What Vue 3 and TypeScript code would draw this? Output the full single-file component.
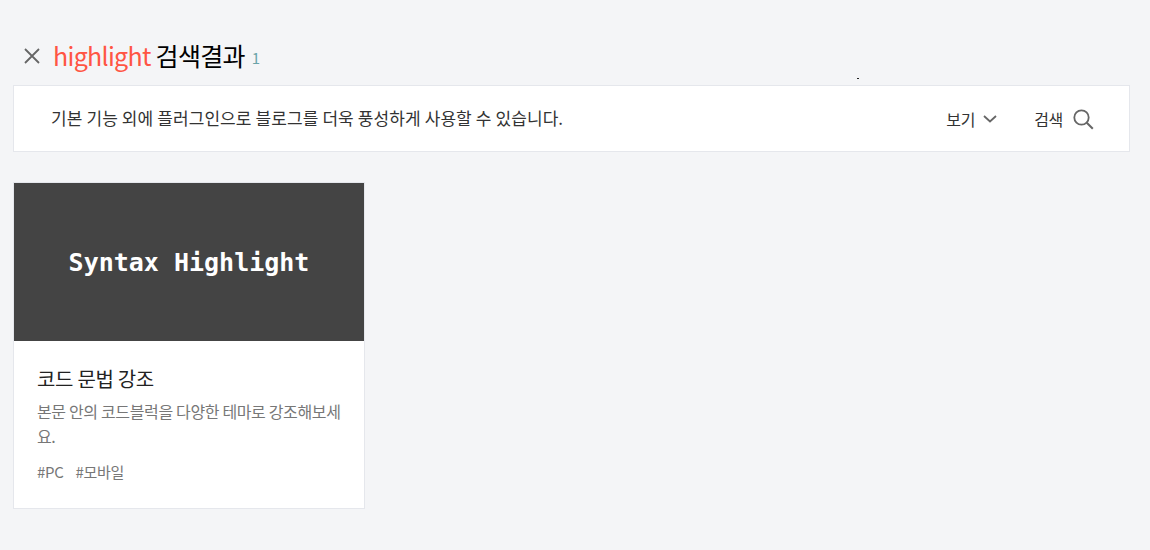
<template>
  <div class="page">
    <!-- Search result heading -->
    <div class="result-head">
      <svg class="close-icon" width="18" height="18" viewBox="0 0 18 18" fill="none">
        <path d="M2 2l14 14M16 2L2 16" stroke="#666" stroke-width="1.8" />
      </svg>
      <h2 class="result-title">
        <span class="keyword">{{ keyword }}</span> 검색결과
      </h2>
      <span class="result-count">{{ plugins.length }}</span>
    </div>
    <i class="speck"></i>

    <!-- Toolbar -->
    <div class="toolbar">
      <p class="intro">기본 기능 외에 플러그인으로 블로그를 더욱 풍성하게 사용할 수 있습니다.</p>
      <div class="actions">
        <button class="action view-btn">
          보기
          <svg width="14" height="8" viewBox="0 0 14 8" fill="none">
            <path d="M1 1l6 5.5L13 1" stroke="#666" stroke-width="1.8" />
          </svg>
        </button>
        <button class="action search-btn">
          검색
          <svg width="22" height="22" viewBox="0 0 22 22" fill="none">
            <circle cx="9.5" cy="9.5" r="7.2" stroke="#666" stroke-width="1.8" />
            <path d="M14.8 14.8l6 6" stroke="#666" stroke-width="2" />
          </svg>
        </button>
      </div>
    </div>

    <!-- Plugin cards -->
    <div class="card-list">
      <div v-for="plugin in plugins" :key="plugin.title" class="card">
        <div class="thumb">{{ plugin.thumb }}</div>
        <div class="card-body">
          <h3 class="card-title">{{ plugin.title }}</h3>
          <p class="card-desc">{{ plugin.desc }}</p>
          <div class="tags">
            <span v-for="tag in plugin.tags" :key="tag">#{{ tag }}</span>
          </div>
        </div>
      </div>
    </div>
  </div>
</template>

<script setup lang="ts">
const keyword = 'highlight';

const plugins = [
  {
    thumb: 'Syntax Highlight',
    title: '코드 문법 강조',
    desc: '본문 안의 코드블럭을 다양한 테마로 강조해보세요.',
    tags: ['PC', '모바일'],
  },
];
</script>

<style>
html,
body {
  margin: 0;
  background: #f4f5f7;
}
</style>

<style scoped>
.page {
  position: relative;
  width: 1150px;
  height: 550px;
  box-sizing: border-box;
  padding: 38px 20px 0 13px;
  overflow: hidden;
  font-family: "Noto Sans CJK KR", "Noto Sans", sans-serif;
  color: #333;
}

.result-head {
  display: flex;
  align-items: center;
  height: 36px;
  padding-left: 10px;
}

.close-icon {
  margin-right: 12px;
}

.result-title {
  margin: -3px 0 0;
  font-size: 25px;
  font-weight: 400;
  letter-spacing: -0.7px;
  color: #000;
  white-space: nowrap;
}

.keyword {
  color: #ff5544;
}

.result-count {
  margin: 2px 0 0 7px;
  font-size: 15px;
  color: #6aa3a8;
}

.speck {
  position: absolute;
  left: 857px;
  top: 78px;
  width: 2px;
  height: 1px;
  background: #222;
}

.toolbar {
  display: flex;
  align-items: center;
  justify-content: space-between;
  height: 67px;
  box-sizing: border-box;
  margin-top: 11px;
  padding: 0 35px 0 37px;
  background: #fff;
  border: 1px solid #e5e7ec;
}

.intro {
  margin: -3px 0 0;
  font-size: 17px;
  letter-spacing: 0.1px;
  color: #333;
}

.actions {
  display: flex;
  align-items: center;
  gap: 37px;
}

.action {
  display: flex;
  align-items: center;
  padding: 0;
  border: 0;
  background: none;
  font: inherit;
  font-size: 16px;
  letter-spacing: -0.3px;
  color: #333;
}

.view-btn {
  gap: 8px;
}

.search-btn {
  gap: 9px;
}

.card-list {
  display: flex;
  margin-top: 30px;
}

.card {
  width: 352px;
  box-sizing: border-box;
  background: #fff;
  border: 1px solid #e5e7ec;
}

.thumb {
  display: flex;
  align-items: center;
  justify-content: center;
  height: 158px;
  padding-top: 1px;
  box-sizing: border-box;
  background: #444;
  font-family: "DejaVu Sans Mono", monospace;
  font-size: 25px;
  font-weight: 700;
  color: #fff;
}

.card-body {
  padding: 23px 23px 24px;
}

.card-title {
  margin: 0;
  font-size: 20px;
  line-height: 30px;
  font-weight: 400;
  letter-spacing: -0.3px;
  color: #222;
}

.card-desc {
  margin: 5px 0 0;
  font-size: 16px;
  line-height: 25px;
  letter-spacing: -0.35px;
  color: #777;
}

.tags {
  display: flex;
  gap: 12px;
  margin-top: 11px;
  font-size: 15px;
  line-height: 24px;
  letter-spacing: -0.3px;
  color: #777;
}
</style>
